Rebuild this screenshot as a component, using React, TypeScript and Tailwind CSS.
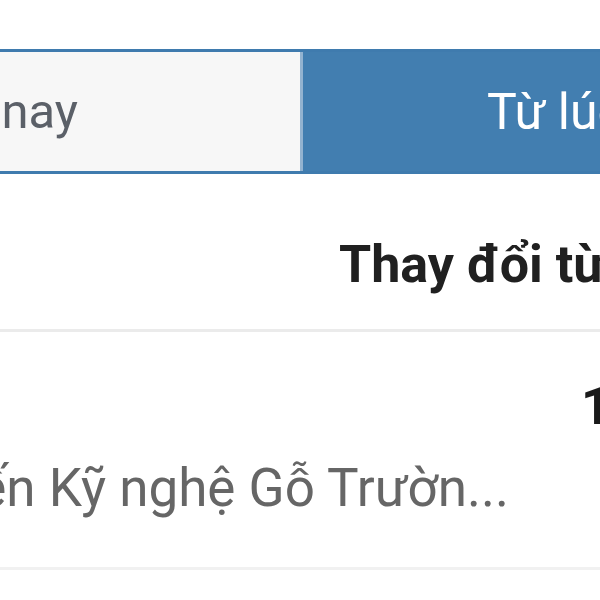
import React from "react";

export default function App() {
  return (
    <div className="w-[600px] h-[600px] overflow-hidden bg-white relative" style={{ fontFamily: "Roboto, 'Noto Sans', sans-serif" }}>
      <div className="h-[49px]" />
      <div className="flex h-[125px] border-y-[3px] border-[#3f7bae] w-[900px]">
        <div className="w-[300px] flex justify-end items-center bg-[#f7f7f7] pr-[222px] overflow-visible">
          <span className="whitespace-nowrap text-[49px] text-[#5b6068] leading-none">Hôm nay</span>
        </div>
        <div className="w-[3px] bg-[#93b3d0]" />
        <div className="flex-1 bg-[#427eb0] flex items-center pl-[184px]">
          <span className="whitespace-nowrap text-[50px] text-white leading-none">Từ lúc mua</span>
        </div>
      </div>
      <div className="h-[158px] flex items-end pb-[38px] pl-[339px] border-b-[3px] border-[#ebebeb] w-[900px]">
        <span className="whitespace-nowrap text-[52px] font-bold text-[#202020] leading-none">Thay đổi từ lúc mua</span>
      </div>
      <div className="h-[238px] border-b-[3px] border-[#f1f1f1] w-[900px] flex flex-col">
        <div className="pl-[581px] pt-[49px]">
          <span className="whitespace-nowrap text-[52px] font-bold text-[#1a1a1a] leading-none">12,5%</span>
        </div>
        <div className="flex justify-end w-[600px] pr-[91px] mt-[29px]">
          <span className="whitespace-nowrap text-[53px] text-[#666666] leading-none">CTCP Chế biến Kỹ nghệ Gỗ Trườn...</span>
        </div>
      </div>
    </div>
  );
}
